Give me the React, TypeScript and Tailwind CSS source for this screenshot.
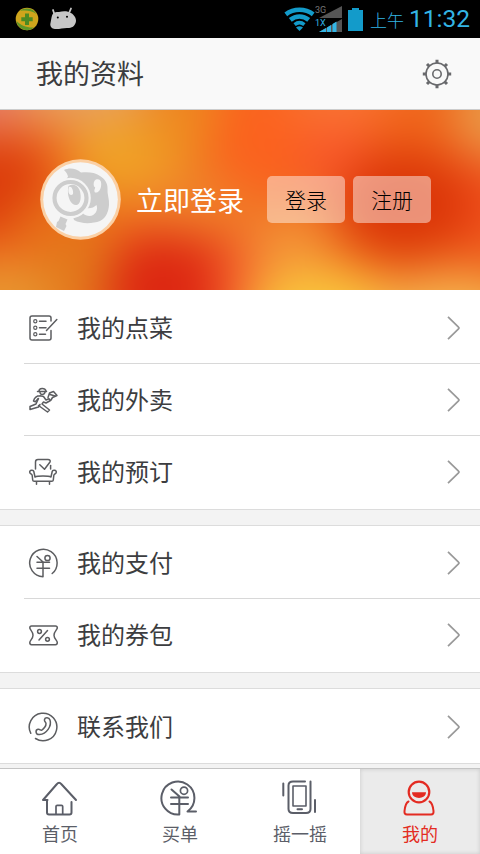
import type { ReactNode } from "react";

// Soft colour spots behind the login banner
const spots = [
  { x: -10, y: -18, rx: 60, ry: 38, fill: "#e67c6a" },
  { x: 85, y: -20, rx: 70, ry: 40, fill: "#e8a060" },
  { x: 130, y: 48, rx: 62, ry: 42, fill: "#f0a226" },
  { x: 190, y: 5, rx: 50, ry: 40, fill: "#ee8a20" },
  { x: -5, y: 78, rx: 56, ry: 50, fill: "#dc3c0c" },
  { x: 60, y: 115, rx: 50, ry: 34, fill: "#e87018" },
  { x: 5, y: 190, rx: 66, ry: 38, fill: "#e8962f" },
  { x: 85, y: 165, rx: 44, ry: 38, fill: "#e27a1c" },
  { x: 172, y: 180, rx: 66, ry: 62, fill: "#dd2812" },
  { x: 195, y: 95, rx: 60, ry: 32, fill: "#f0802a" },
  { x: 265, y: 25, rx: 54, ry: 60, fill: "#fb621e" },
  { x: 345, y: -8, rx: 60, ry: 30, fill: "#fa7434" },
  { x: 340, y: 50, rx: 44, ry: 34, fill: "#f8582a" },
  { x: 420, y: 22, rx: 54, ry: 36, fill: "#f0641a" },
  { x: 495, y: 5, rx: 40, ry: 46, fill: "#ea9a48" },
  { x: 475, y: 95, rx: 50, ry: 50, fill: "#f0501c" },
  { x: 405, y: 94, rx: 66, ry: 54, fill: "#db3608" },
  { x: 240, y: 175, rx: 26, ry: 50, fill: "#f4602c" },
  { x: 290, y: 140, rx: 42, ry: 40, fill: "#f39136" },
  { x: 325, y: 204, rx: 80, ry: 46, fill: "#fac63c" },
  { x: 450, y: 212, rx: 84, ry: 46, fill: "#f6b750" },
];

function Banner() {
  return (
    <svg className="absolute inset-0 h-full w-full" viewBox="0 0 480 180" preserveAspectRatio="none">
      <defs>
        <filter id="soft" x="-30%" y="-60%" width="160%" height="220%" colorInterpolationFilters="sRGB">
          <feGaussianBlur stdDeviation="23" />
        </filter>
      </defs>
      <rect width="480" height="180" fill="#ee6a1e" />
      <g filter="url(#soft)">
        <rect x="-80" y="-80" width="640" height="340" fill="#ee6a1e" />
        {spots.map((s, i) => (
          <ellipse key={i} cx={s.x} cy={s.y} rx={s.rx} ry={s.ry} fill={s.fill} />
        ))}
      </g>
    </svg>
  );
}

function Icon({ children }: { children: ReactNode }) {
  return (
    <svg
      className="h-8 w-8 shrink-0 text-[#5c5d60]"
      viewBox="0 0 32 32"
      fill="none"
      stroke="currentColor"
      strokeWidth="1.5"
      strokeLinecap="round"
      strokeLinejoin="round"
    >
      {children}
    </svg>
  );
}

const OrderIcon = () => (
  <Icon>
    <path d="M24 9V6a2 2 0 0 0-2-2H5a2 2 0 0 0-2 2v20a2 2 0 0 0 2 2h17a2 2 0 0 0 2-2v-7.5" />
    <path d="M19.500 18.500L29.800 7.500" />
    <circle cx="8.300" cy="9.300" r="1.600" strokeWidth="1.200" />
    <circle cx="8.300" cy="15.800" r="1.600" strokeWidth="1.200" />
    <circle cx="8.300" cy="22.300" r="1.600" strokeWidth="1.200" />
    <path d="M12.500 9.300h6.500M12.500 15.800h6.500M12.500 22.300h6" />
  </Icon>
);

const DeliveryIcon = () => (
  <Icon>
    <path d="M10.500 7.500h9M12 7c0-3.300 6-3.500 7-.2M13 8.500c.3 2.500 4.300 2.500 5 0" />
    <path d="M13 11.800c-3 0-5.500 1.700-6.500 5.200l2 .8 2.500-3M13 11.800l3.500.7 2.500 3.500 3-1.300 1.500 1.800-4.500 2.500-2.500-1-1.500 2 7.500 6-2 2-9-6.500" />
    <path d="M11.500 14.500l-2.500 5.500-6 2.500v3l8.500-2.500 1.500-2.500" />
    <path d="M21 13.500l1.500-4.500 4-1.500 3.500 4-4.500 2-1.500 2.500M23 10.500l5 1.500" />
  </Icon>
);

const BookingIcon = () => (
  <Icon>
    <path d="M8.500 13V6c0-1.500 1-2.400 2.500-2.400h10c1.800 0 2.700 1 2 2.400l-5.500 7.300-4.700-4.500" />
    <path d="M23.600 9.500V13" />
    <path d="M8 21c2.500-1.300 13.500-1.300 16 0l1.200-5.500c.4-2 4.300-1.500 4.100.7-.1 1.600-2.300 1.800-2.500 3.300l-.5 4.500c-.1 1-.5 1.300-1.500 1.300H7.200c-1 0-1.400-.3-1.500-1.300l-.5-4.500c-.2-1.500-2.400-1.700-2.500-3.300-.2-2.200 3.700-2.700 4.100-.7z" />
    <path d="M9.500 26v2.300M22.500 26v2.300" />
  </Icon>
);

const PayIcon = () => (
  <Icon>
    <path d="M25.200 26.500A13.700 13.700 0 1 0 16 29.700V15" />
    <path d="M10 9.500l5.500 5M10 15.300h12.500M10 21.300h12.500" />
    <circle cx="20.500" cy="11" r="2.600" />
  </Icon>
);

const CouponIcon = () => (
  <Icon>
    <path d="M4.500 7h24c1.400 0 1.800.7 1.800 2 0 1.600-3.300 3.500-3.300 7.200 0 3.500 3.300 5.300 3.300 7.300 0 1.500-.4 2.200-1.800 2.200h-24C3.100 25.700 2.800 25 2.800 23.500c0-2 3.200-3.800 3.200-7.300C6 12.500 2.800 10.600 2.800 9c0-1.300.3-2 1.700-2z" />
    <path d="M20.500 11.500l-8.500 9.500" />
    <circle cx="12.500" cy="12.500" r="1.900" />
    <circle cx="20.500" cy="20.300" r="1.900" />
  </Icon>
);

const ContactIcon = () => (
  <Icon>
    <path d="M3.800 22.300A13.800 13.800 0 1 1 8.500 27.500" />
    <path d="M17.500 8.500c.5-2.300 4.500-2.400 5.500.5 2 6-3.500 14-10.500 14.500-4 .3-4.500-4.500-1.500-5.200 2-.4 2.500 1.400 3.800.8 1.800-1 4.500-4.300 4.200-6.600-.2-1.500-2-1.800-1.500-4z" />
  </Icon>
);

const groups = [
  [
    { label: "我的点菜", icon: <OrderIcon />, size: "h-[74px] border-b pt-[3px]" },
    { label: "我的外卖", icon: <DeliveryIcon />, size: "h-[72px] border-b pt-px" },
    { label: "我的预订", icon: <BookingIcon />, size: "h-[73px] pt-px pb-0.5" },
  ],
  [
    { label: "我的支付", icon: <PayIcon />, size: "h-[73px] border-b pt-px" },
    { label: "我的券包", icon: <CouponIcon />, size: "h-[73px] pt-px pb-0.5" },
  ],
  [{ label: "联系我们", icon: <ContactIcon />, size: "h-[74px] pt-px" }],
];

function TabIcon({ children }: { children: ReactNode }) {
  return (
    <svg
      className="h-10 w-10"
      viewBox="0 0 40 40"
      fill="none"
      stroke="currentColor"
      strokeWidth="2"
      strokeLinecap="round"
      strokeLinejoin="round"
    >
      {children}
    </svg>
  );
}

const tabs = [
  {
    label: "首页",
    icon: (
      <TabIcon>
        <path d="M7 21.500v12c0 1.400.6 2 2 2h20.500c1.400 0 2-.6 2-2V23" />
        <path d="M7.500 21H3L16.500 5.500c2-2.200 3.200-2.200 5.200 0L36 21" />
        <path d="M16 35v-7.500c0-.8.300-1.200 1.200-1.200h4.300c.9 0 1.200.4 1.200 1.200V35" strokeWidth="1.700" />
      </TabIcon>
    ),
  },
  {
    label: "买单",
    icon: (
      <TabIcon>
        <path d="M36 32.500h-8.500A16.500 16.500 0 1 0 19.300 35.500V19" />
        <path d="M11.500 10.500l8 7M11 18.500h17M11 25h17" />
        <circle cx="24" cy="11.700" r="3.600" strokeWidth="1.700" />
      </TabIcon>
    ),
  },
  {
    label: "摇一摇",
    icon: (
      <TabIcon>
        <path d="M25 2.500H13c-2.500 0-4.500 1.500-4.500 4V30c0 2.500 2 4 4.500 4h13c2.500 0 4.500-1.500 4.500-4V2.500" />
        <rect x="13" y="7" width="13" height="20" strokeWidth="1.600" />
        <path d="M17.500 30.300h4.500M3.300 4.500v12M35 21v12" />
      </TabIcon>
    ),
  },
  {
    label: "我的",
    icon: (
      <TabIcon>
        <circle cx="19" cy="13" r="10.300" strokeWidth="2.200" />
        <path d="M12 13.300h14c0 7.500-14 7.500-14 0z" fill="currentColor" stroke="none" />
        <path d="M8.500 22.500c-2.500 1.200-3.500 5-4 9.500-.2 2.300.5 3.500 2.500 3.500h24c2 0 2.700-1.200 2.500-3.500-.5-4.500-1.500-8.300-4-9.500" />
      </TabIcon>
    ),
  },
];

function StatusBar() {
  return (
    <div className="flex h-[38px] items-center bg-black pr-2 pl-[15px]">
      <svg className="h-6 w-6" viewBox="0 0 24 24">
        <circle cx="12" cy="12" r="11.300" fill="#cfa51c" />
        <path d="M1.500 14A10.700 10.700 0 0 0 19 20.500C12 21 5 18 1.500 14zM5 4C10 0 18 1 21.500 7 16 3.500 10 3 5 4z" fill="#5e9628" />
        <path d="M10 6.500h4v3.700h3.700v4H14V18h-4v-3.800H6.300v-4H10z" fill="#4d8a22" />
      </svg>
      <svg className="ml-[11px] h-6 w-[27px]" viewBox="0 0 27 24">
        <path d="M3.500 6C6 4.800 7 5 9 5c3-.8 6-1 9-.3 4 1 8 4.500 8 8.800 0 3.800-3 7.500-7 7.500-5-.5-8 1-13 1-3.500 0-6.500-2-5.500-6C1.500 11.500 1.500 8 3.500 6z" fill="#c7c7c7" />
        <path d="M4 6L3 3M19.500 5l1.500-3.500" stroke="#c7c7c7" strokeWidth="1.800" strokeLinecap="round" />
        <circle cx="7.800" cy="10.500" r="1" fill="#000" />
        <circle cx="17" cy="9.800" r="1" fill="#000" />
      </svg>
      <svg className="ml-auto h-6 w-[31px]" viewBox="0 0 31 24" fill="none" stroke="#139bca" strokeWidth="4.600">
        <path d="M1.800 7.300c8-6 19.400-6 27.400 0" />
        <path d="M6.300 12.900c5.500-4.500 12.900-4.500 18.400 0" />
        <path d="M10.600 17.700c3.200-2.600 6.600-2.600 9.800 0" strokeWidth="3.600" />
        <path d="M12 20.500q3.500-2.500 7 0l-3.500 3.500z" fill="#139bca" stroke="none" />
      </svg>
      <svg className="h-7 w-7" viewBox="0 0 28 28">
        <path d="M27 1v12H4zM27 14v13H4z" fill="#555" />
        <path d="M4 27l7-4v4zM12 22.500l4-2.500v7h-4zM17.500 19l4-2.500V27h-4z" fill="#33b5e5" />
        <text x="0" y="8" fontSize="9" fill="#777" fontFamily="Roboto, sans-serif">3G</text>
        <text x="0" y="21" fontSize="9" fill="#33b5e5" fontFamily="Roboto, sans-serif">1X</text>
      </svg>
      <svg className="ml-[5px] h-[23px] w-[15px]" viewBox="0 0 15 23">
        <path d="M4 0h7v2h4v21H0V2h4z" fill="#139bca" />
      </svg>
      <span className="ml-[7px] w-[34px] text-[17px] leading-none font-light whitespace-nowrap text-[#33b5e5]">上午</span>
      <span className="ml-[5px] w-[63px] font-[Roboto] text-[24.5px] leading-none whitespace-nowrap text-[#33b5e5]">
        11:32
      </span>
    </div>
  );
}

function SettingsIcon() {
  return (
    <svg className="h-8 w-8" viewBox="0 0 32 32" fill="none" stroke="#68696c">
      <circle cx="16" cy="16" r="11" strokeWidth="1.600" />
      <circle cx="16" cy="16" r="4.200" strokeWidth="1.600" />
      <g strokeWidth="3">
        <path d="M16 1.800V5.500M16 26.500v3.700M1.800 16H5.500M26.500 16h3.700" />
        <path d="M6 6l2.500 2.500M23.500 23.500L26 26M26 6l-2.500 2.500M8.500 23.500L6 26" />
      </g>
    </svg>
  );
}

function Avatar() {
  return (
    <svg className="h-[82px] w-[82px] shrink-0" viewBox="0 0 82 82">
      <circle cx="41.500" cy="40.500" r="40.300" fill="#fbd0a5" />
      <circle cx="41.500" cy="40.500" r="37.300" fill="#f5f5f5" />
      <path
        d="M25 11c5-2.500 12-2 17 2.500 6-.8 14-.5 19 3.500 5 3 8 8 7.500 13-.5 5 2 10 1.500 16-.5 7-3 13-9 16-8 3-19 3-26-1L24 22c2.500-1 4-2.500 5-4.500-.5-2.500-2-4.500-4-6.500z"
        fill="#cdcdcd"
      />
      <path d="M57 20.500c4-1.500 6 2 5 7-.7 4-3 6.500-6 6-2-3 2-5-1-6-1-3 0-6 2-7z" fill="#f5f5f5" />
      <path d="M47 49c4 1 8-.5 10.500-3 2 5-1.500 11-7 11-2.500 0-5-1-6.500-2.500z" fill="#f5f5f5" />
      <circle cx="31.500" cy="39" r="20.300" fill="#f5f5f5" />
      <circle cx="31.500" cy="39" r="16" fill="none" stroke="#cdcdcd" strokeWidth="4.200" />
      <path d="M29.500 27c5-3 10 0 11.500 5.500 1.500 6 .5 13-3.500 13.500-5 .5-8-6-8.500-11.500-.2-3 0-5.500.5-7.500z" fill="#cdcdcd" />
      <path d="M30 28c2.500-1 4.500 3 4 7-1.500 2-4 1-4.500-2-.3-2 0-3.500.5-5z" fill="#f5f5f5" />
      <path d="M21.500 57.500l7 3-2 4.500 1 2-2.500 5-8-4 1-5 1.500-1z" fill="#cdcdcd" />
    </svg>
  );
}

function Chevron() {
  return (
    <svg className="mr-[19px] ml-auto h-6 w-[14px]" viewBox="0 0 14 24" fill="none" stroke="#999" strokeWidth="1.700">
      <path d="M1 .8l10.500 10.300q1 .9 0 1.800L1 23.200" />
    </svg>
  );
}

export default function App() {
  return (
    <div className="flex h-[854px] w-[480px] flex-col overflow-hidden bg-[#f3f3f3] font-['Noto_Sans_CJK_SC',sans-serif] text-[#3c3d40]">
      <StatusBar />

      <header className="flex h-[72px] items-center justify-between border-b border-[#ccc] bg-[#f9f9f9] pr-[27px] pl-9">
        <h1 className="pb-0.5 text-[27px] leading-none">我的资料</h1>
        <SettingsIcon />
      </header>

      <section className="relative h-[180px] overflow-hidden">
        <Banner />
        <div className="relative flex h-full items-center pl-[39px]">
          <Avatar />
          <span className="ml-[15px] pb-0.5 text-[27px] leading-none text-white">立即登录</span>
          <button className="mt-[-1px] ml-[23px] h-[47px] w-[78px] rounded-[5px] bg-white/45 text-[21px] leading-none font-light text-black">
            登录
          </button>
          <button className="mt-[-1px] ml-2 h-[47px] w-[78px] rounded-[5px] bg-white/45 text-[21px] leading-none font-light text-black">
            注册
          </button>
        </div>
      </section>

      <main className="flex flex-col gap-[15px]">
        {groups.map((rows, g) => (
          <ul key={g} className={`border-b border-[#dcdcdc] bg-white ${g > 0 ? "border-t" : ""}`}>
            {rows.map((row) => (
              <li key={row.label} className={`ml-6 flex items-center border-[#d8d8d8] pl-[3px] ${row.size}`}>
                {row.icon}
                <span className="ml-[18px] pb-0.5 text-[24px] leading-none">{row.label}</span>
                <Chevron />
              </li>
            ))}
          </ul>
        ))}
      </main>

      <nav className="mt-auto grid h-[86px] grid-cols-4 border-t border-[#c4c4c4] bg-white">
        {tabs.map((tab, i) => (
          <button
            key={tab.label}
            className={`flex flex-col items-center pt-[10px] ${
              i === 3 ? "bg-[#ebebeb] text-[#e32b22] shadow-[inset_0_0_4px_#c8c8c8]" : "text-[#5b5e68]"
            }`}
          >
            {tab.icon}
            <span className="mt-[5px] text-[18px] leading-none">{tab.label}</span>
          </button>
        ))}
      </nav>
    </div>
  );
}
